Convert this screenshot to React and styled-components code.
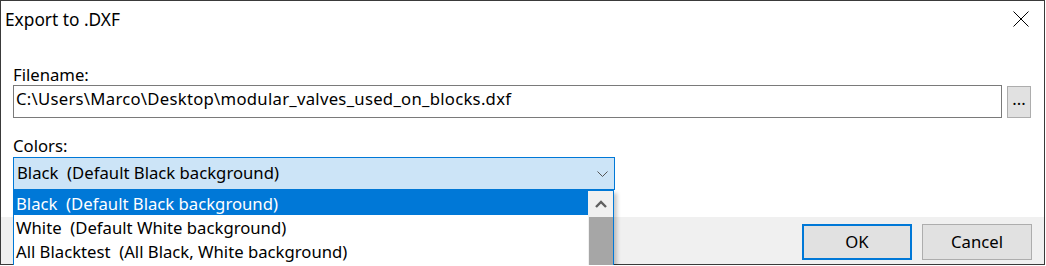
import React from 'react';
import styled, { createGlobalStyle } from 'styled-components';

const Global = createGlobalStyle`
  html, body { margin: 0; padding: 0; background: #ffffff; }
  body { font-family: "Noto Sans", "Open Sans", sans-serif; }
`;

const FONT = `"Noto Sans", "Open Sans", sans-serif`;

const Window = styled.div`
  box-sizing: border-box;
  width: 1045px;
  height: 265px;
  border: 1px solid #3a3a3a;
  background: #ffffff;
  display: flex;
  flex-direction: column;
  font-family: ${FONT};
  font-size: 16.7px;
  line-height: 20px;
  color: #000000;
`;

const TitleBar = styled.div`
  display: flex;
  justify-content: space-between;
  align-items: flex-start;
  height: 44px;
  flex-shrink: 0;
`;

const Title = styled.div`
  padding: 9px 0 0 4px;
  font-size: 17.3px;
  white-space: pre;
`;

const CloseButton = styled.div`
  width: 46px;
  height: 36px;
  display: flex;
  align-items: center;
  justify-content: center;
`;

const Body = styled.div`
  flex: 1;
  display: flex;
  flex-direction: column;
  padding: 20px 13px 0 12px;
`;

const Label = styled.div`
  height: 20px;
  margin-bottom: ${(p) => p.$gap || 0}px;
  white-space: pre;
`;

const InputRow = styled.div`
  display: flex;
  align-items: flex-start;
  gap: 5px;
  margin-bottom: 18px;
`;

const TextBox = styled.div`
  box-sizing: border-box;
  flex: 1;
  height: 33px;
  border: 1px solid #7a7a7a;
  padding: 3px 0 0 2px;
  letter-spacing: 0.27px;
  white-space: pre;
  overflow: hidden;
`;

const BrowseButton = styled.div`
  box-sizing: border-box;
  width: 24px;
  height: 32px;
  margin-top: 1px;
  background: #e1e1e1;
  border: 1px solid #adadad;
  padding-top: 2px;
  text-align: center;
`;

const ComboWrap = styled.div`
  position: relative;
  width: 602px;
`;

const Combo = styled.div`
  box-sizing: border-box;
  height: 33px;
  border: 1px solid #0078d7;
  background: #cce4f7;
  padding: 5px 6px 0 3px;
  display: flex;
  justify-content: space-between;
  align-items: flex-start;
  white-space: pre;
`;

const Chevron = styled.svg`
  margin-top: 8px;
  flex-shrink: 0;
`;

const DropList = styled.div`
  position: absolute;
  top: 33px;
  left: 0;
  z-index: 5;
  box-sizing: border-box;
  width: 601px;
  height: 80px;
  border: 1px solid #0078d7;
  background: #ffffff;
  display: flex;
  box-shadow: 3px 3px 4px rgba(0, 0, 0, 0.22);
`;

const Items = styled.div`
  flex: 1;
  display: flex;
  flex-direction: column;
`;

const Item = styled.div`
  height: 24px;
  flex-shrink: 0;
  box-sizing: border-box;
  padding: 3px 0 0 2px;
  white-space: pre;
  background: ${(p) => (p.$selected ? '#0078d7' : 'transparent')};
  color: ${(p) => (p.$selected ? '#ffffff' : '#000000')};
`;

const ScrollBar = styled.div`
  width: 25px;
  background: #f0f0f0;
  display: flex;
  flex-direction: column;
`;

const ScrollUp = styled.div`
  height: 25px;
  display: flex;
  align-items: center;
  justify-content: center;
  flex-shrink: 0;
`;

const Thumb = styled.div`
  flex: 1;
  margin: 1px 0 0 1px;
  background: #a6a6a6;
`;

const Footer = styled.div`
  height: 47px;
  flex-shrink: 0;
  background: #f0f0f0;
  display: flex;
  justify-content: flex-end;
  align-items: flex-start;
  gap: 10px;
  padding: 7px 12px 0 0;
  box-sizing: border-box;
`;

const Button = styled.div`
  box-sizing: border-box;
  width: 110px;
  height: 36px;
  background: #e1e1e1;
  border: ${(p) => (p.$default ? '2px solid #0078d7' : '1px solid #adadad')};
  display: flex;
  align-items: center;
  justify-content: center;
`;

export default function App() {
  return (
    <>
      <Global />
      <Window>
        <TitleBar>
          <Title>Export to .DXF</Title>
          <CloseButton>
            <svg width="16" height="16" viewBox="0 0 16 16">
              <path d="M0.5 0.5 L15.5 15.5 M15.5 0.5 L0.5 15.5" stroke="#000" strokeWidth="1" fill="none" />
            </svg>
          </CloseButton>
        </TitleBar>
        <Body>
          <Label>Filename:</Label>
          <InputRow>
            <TextBox>C:\Users\Marco\Desktop\modular_valves_used_on_blocks.dxf</TextBox>
            <BrowseButton>...</BrowseButton>
          </InputRow>
          <Label $gap={1}>Colors:</Label>
          <ComboWrap>
            <Combo>
              <span>Black  (Default Black background)</span>
              <Chevron width="11" height="6" viewBox="0 0 11 6">
                <path d="M0.5 0.5 L5.5 5.5 L10.5 0.5" stroke="#555" strokeWidth="1" fill="none" />
              </Chevron>
            </Combo>
            <DropList>
              <Items>
                <Item $selected>Black  (Default Black background)</Item>
                <Item>White  (Default White background)</Item>
                <Item>All Blacktest  (All Black, White background)</Item>
              </Items>
              <ScrollBar>
                <ScrollUp>
                  <svg width="12" height="8" viewBox="0 0 12 8">
                    <path d="M1 7 L6 2 L11 7" stroke="#606060" strokeWidth="2.4" fill="none" />
                  </svg>
                </ScrollUp>
                <Thumb />
              </ScrollBar>
            </DropList>
          </ComboWrap>
        </Body>
        <Footer>
          <Button $default>OK</Button>
          <Button>Cancel</Button>
        </Footer>
      </Window>
    </>
  );
}
